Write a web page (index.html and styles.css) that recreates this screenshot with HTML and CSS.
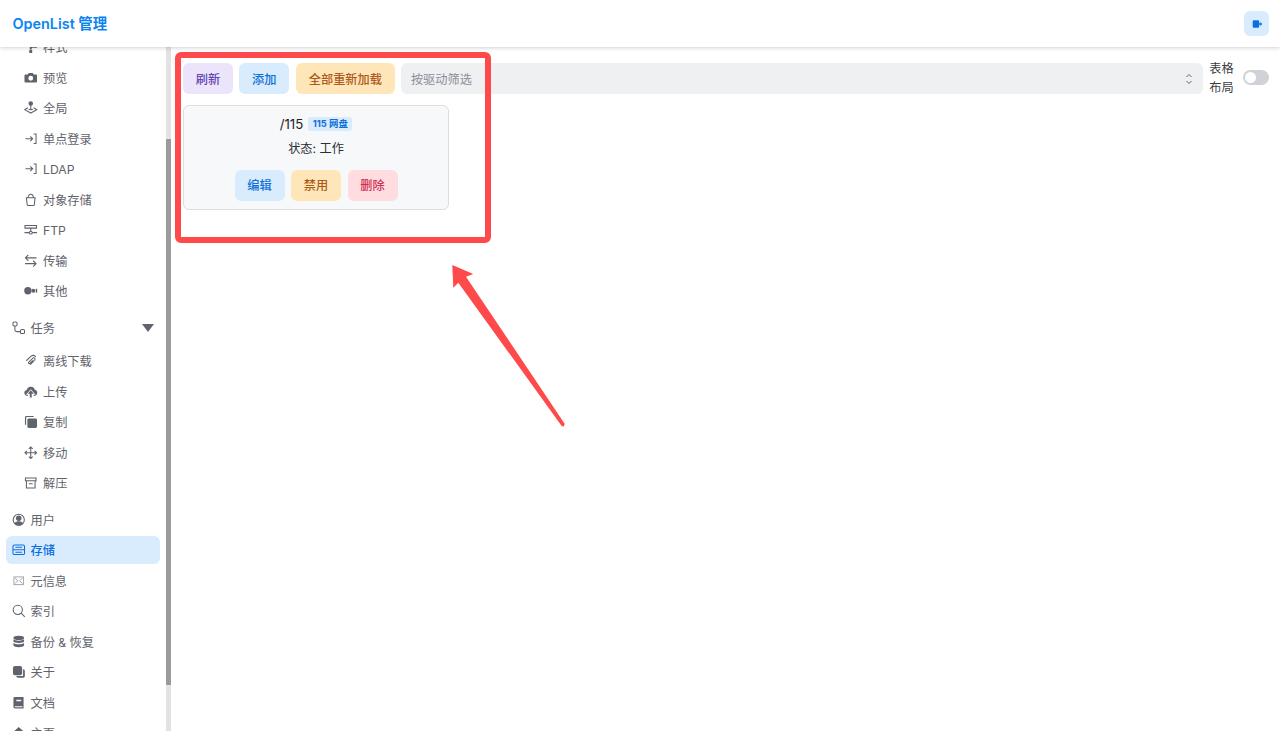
FILE: index.html
```html
<!DOCTYPE html>
<html lang="zh">
<head>
<meta charset="utf-8">
<title>OpenList 管理</title>
<link rel="stylesheet" href="styles.css">
</head>
<body>
<header class="topbar">
  <h1 class="brand">OpenList 管理</h1>
  <button class="logout" aria-label="退出"><svg viewBox="0 0 14 14" class="solid"><rect x="2" y="2.5" width="7.5" height="9" rx="1.5"/><path d="M9 6h2V4.500L13 7l-2 2.500V8H9z"/></svg></button>
</header>
<div class="shell">
  <aside class="side">
    <nav class="nav">
      <a class="item sub"><svg viewBox="0 0 14 14" class="solid"><path d="M1 1.500h9.500v4.500H1zM11.500 3h2v5H8v1.500H6V6.500h5.500zM5.500 10h3v3.500h-3z"/></svg>样式</a>
      <a class="item sub"><svg viewBox="0 0 14 14" class="solid"><path fill-rule="evenodd" d="M1.500 3.500h2.300L5 2h4l1.200 1.500h2.300a1 1 0 0 1 1 1v6.500a1 1 0 0 1-1 1h-11a1 1 0 0 1-1-1V4.500a1 1 0 0 1 1-1zM7 5a2.500 2.500 0 1 0 0 5 2.500 2.500 0 0 0 0-5z"/></svg>预览</a>
      <a class="item sub"><svg viewBox="0 0 14 14" class="line"><circle cx="7" cy="2.500" r="1.800" fill="currentColor"/><path d="M7 3v6M4 7 .8 9 7 12.500 13.200 9 10 7M4.800 8.500c1 .8 3.400.8 4.400 0"/></svg>全局</a>
      <a class="item sub"><svg viewBox="0 0 14 14" class="line"><path d="M1.500 7h7.500M6.500 4.500 9 7 6.500 9.500M10 2h2.500v10H10"/></svg>单点登录</a>
      <a class="item sub"><svg viewBox="0 0 14 14" class="line"><path d="M1.500 7h7.500M6.500 4.500 9 7 6.500 9.500M10 2h2.500v10H10"/></svg>LDAP</a>
      <a class="item sub"><svg viewBox="0 0 14 14" class="line"><path d="M2.500 5h9l-.8 7.200a1 1 0 0 1-1 .8H4.300a1 1 0 0 1-1-.8zM4.300 5c0-5 5.400-5 5.400 0"/></svg>对象存储</a>
      <a class="item sub"><svg viewBox="0 0 14 14" class="line"><path d="M1 2.500h12v2.800H1zM7 5.300V8.500M.5 10h5M8.500 10h5"/><circle cx="7" cy="10" r="1.500"/></svg>FTP</a>
      <a class="item sub"><svg viewBox="0 0 14 14" class="line"><path d="M13 4H1.500M4.500 1 1.500 4l3 3M1 10h11.500M9.500 7l3 3-3 3"/></svg>传输</a>
      <a class="item sub last"><svg viewBox="0 0 14 14" class="solid"><circle cx="4" cy="7" r="3.800"/><circle cx="9.700" cy="7" r="2"/><rect x="12.200" y="5" width="1.500" height="4"/></svg>其他</a>

      <a class="item top group"><svg viewBox="0 0 14 14" class="line"><rect x="1" y="1" width="4.200" height="4.200" rx="1.200"/><rect x="8.800" y="8.800" width="4.200" height="4.200" rx="1.200"/><path d="M3 5.200V9a2 2 0 0 0 2 2h3.800"/></svg>任务<span class="caret"></span></a>
      <a class="item sub"><svg viewBox="0 0 14 14" class="line"><path d="M2.500 7 7 2.500c2-1.500 4-1.500 5 .5M4.500 9 8 5.500M6.500 11 11 6.500c1-1.500 0-3-1.500-2.500L5 8.500c-1 1 .5 2 1.500 1l3-3"/></svg>离线下载</a>
      <a class="item sub"><svg viewBox="0 0 14 14" class="solid"><path d="M6 13V9H3.800L7 5.500 10.200 9H8v4zM4 11.500H3.300A3.200 3.200 0 0 1 2.800 5.200 4.300 4.300 0 0 1 11.200 5 3.300 3.300 0 0 1 10.700 11.500H10V10H12L7 4.500 2 10H4z"/></svg>上传</a>
      <a class="item sub"><svg viewBox="0 0 14 14" class="solid"><rect x="3.500" y="3.500" width="10" height="10" rx="1.500"/><path d="M1 10V2.500A1.500 1.500 0 0 1 2.500 1H10v1.200H3a.800.800 0 0 0-.800.800v7z"/></svg>复制</a>
      <a class="item sub"><svg viewBox="0 0 14 14" class="line"><path d="M7 1v12M1 7h12M5 3 7 1l2 2M5 11l2 2 2-2M3 5 1 7l2 2M11 5l2 2-2 2"/></svg>移动</a>
      <a class="item sub last"><svg viewBox="0 0 14 14" class="line"><path d="M1.500 2h11v3h-11zM2.500 5v7.500h9V5M5 8h4"/></svg>解压</a>

      <a class="item top"><svg viewBox="0 0 14 14" class="line"><circle cx="7" cy="7" r="5.800"/><circle cx="7" cy="5.500" r="2.300" fill="currentColor"/><path d="M3 11c1-2.500 7-2.500 8 0l-2 1.500H5z" fill="currentColor"/></svg>用户</a>
      <a class="item top active"><svg viewBox="0 0 14 14" class="line"><rect x="1" y="2" width="12" height="10" rx="1.500"/><path d="M1 7h12M3.500 4.500h7M3.500 9.500h7"/></svg>存储</a>
      <a class="item top"><svg viewBox="0 0 14 14" class="thin"><rect x="2" y="3" width="10" height="8"/><path d="m3 4 3 3-3 3M11 4 8 7l3 3"/></svg>元信息</a>
      <a class="item top"><svg viewBox="0 0 14 14" class="line"><circle cx="6" cy="6" r="4.800"/><path d="m9.500 9.500 3.800 3.800"/></svg>索引</a>
      <a class="item top"><svg viewBox="0 0 14 14" class="solid"><ellipse cx="7" cy="3" rx="5.500" ry="2.200"/><path d="M1.500 4.500C3 6.300 11 6.300 12.500 4.500v2.300c-1 2-10 2-11 0zM1.500 8.300c1.500 1.800 9.500 1.800 11 0v2.700c-1 2.300-10 2.300-11 0z"/></svg>备份 &amp; 恢复</a>
      <a class="item top"><svg viewBox="0 0 14 14" class="solid"><rect x="1" y="1" width="9.500" height="9.500" rx="2"/><path d="M11.500 4.500c1 0 1.800.6 1.800 1.800v5a2 2 0 0 1-2 2h-5c-1.200 0-1.800-.8-1.800-1.800h6.500a.5.500 0 0 0 .500-.5z"/></svg>关于</a>
      <a class="item top"><svg viewBox="0 0 14 14" class="solid"><path fill-rule="evenodd" d="M3 1h9v12H3a1.500 1.500 0 0 1-1.500-1.500v-9A1.500 1.500 0 0 1 3 1zm1.500 3v1.500h5V4zM3 10.500v1.200h7.800v-1.200z"/></svg>文档</a>
      <a class="item top"><svg viewBox="0 0 14 14" class="solid"><path d="M7 1 1 6.500h2V13h8V6.500h2z"/></svg>主页</a>
    </nav>
    <div class="scrollbar"><div class="thumb"></div></div>
  </aside>
  <main class="content">
    <div class="toolbar">
      <button class="btn violet">刷新</button>
      <button class="btn blue">添加</button>
      <button class="btn amber wide">全部重新加载</button>
      <div class="select"><span>按驱动筛选</span><svg viewBox="0 0 10 14" class="updown"><path d="M2.500 5 5 2.500 7.500 5M2.500 9 5 11.500 7.500 9"/></svg></div>
      <div class="layout-label">表格布局</div>
      <div class="switch"><span class="knob"></span></div>
    </div>
    <section class="card">
      <div class="card-title"><span class="path">/115</span><span class="badge">115 网盘</span></div>
      <div class="status">状态: 工作</div>
      <div class="card-actions">
        <button class="btn blue">编辑</button>
        <button class="btn amber">禁用</button>
        <button class="btn red">删除</button>
      </div>
    </section>
  </main>
</div>
<svg class="annotation" viewBox="0 0 1280 731" aria-hidden="true">
  <rect class="frame" x="178" y="55" width="310" height="185" rx="3"/>
  <path class="arrow" d="M452.300 265 473.300 274 466 276.700 564.800 424 563.500 426.800 561.500 425.800 458.300 282.700 453.300 287.700z"/>
</svg>
</body>
</html>
```
FILE: styles.css
```css
* { box-sizing: border-box; }
html, body { margin: 0; height: 731px; overflow: hidden; background: #fff; }
body {
  font-family: Inter, "Noto Sans CJK SC", sans-serif;
  font-size: 12.2px;
  color: #1c2024;
}
.topbar {
  height: 47px;
  display: flex;
  align-items: center;
  justify-content: space-between;
  padding: 0 11px 0 12.500px;
  background: #fff;
  box-shadow: 0 1px 4px rgba(0,0,0,.18);
  position: relative;
  z-index: 2;
}
.brand { margin: 0 0 3px; font-size: 14.400px; font-weight: 600; color: #0a84f0; }
.logout {
  width: 25px; height: 25px; padding: 0; border: 0; border-radius: 6px;
  background: #d9ecfe; color: #0c6fdf;
  display: flex; align-items: center; justify-content: center;
}
.logout svg { width: 12px; height: 12px; }
.shell { display: flex; height: 684px; }
.side { width: 171px; flex: none; display: flex; height: 100%; }
.nav {
  width: 166px; flex: none; height: 100%; overflow: hidden;
  padding: 0 6px;
  display: flex; flex-direction: column; gap: 3px;
}
.item {
  flex: none; height: 27.500px; display: flex; align-items: center;
  border-radius: 6px; color: #5f636b; font-weight: 400;
}
.item:first-child { margin-top: -13.750px; }
.item svg { width: 13.500px; height: 13.500px; flex: none; margin-right: 5.500px; }
.top { padding-left: 6px; }
.top svg { margin-right: 5px; }
.sub { padding-left: 18px; }
.last { margin-bottom: 6px; }
.group { margin-bottom: 3px; }
.caret {
  margin-left: auto; margin-right: 6.500px;
  width: 0; height: 0;
  border-left: 6px solid transparent; border-right: 6px solid transparent;
  border-top: 8px solid #60646c;
}
.active { background: #d9ecfe; color: #0c6fdf; font-weight: 500; }
.solid { fill: currentColor; stroke: none; }
.line { fill: none; stroke: currentColor; stroke-width: 1.100; }
.thin { fill: none; stroke: #a3a6ab; stroke-width: 1; }
.scrollbar { width: 5px; height: 100%; background: #e2e2e2; }
.thumb { width: 100%; height: 546px; margin-top: 92px; background: #9b9b9b; }
.content { flex: 1; min-width: 0; padding: 13px 11px 0 12px; }
.toolbar { display: flex; align-items: center; gap: 6.300px; }
.btn {
  width: 50px; height: 30.500px; flex: none; padding: 0;
  border: 0; border-radius: 6px;
  font: 500 12.200px Inter, "Noto Sans CJK SC", sans-serif;
}
.wide { width: 99.500px; }
.violet { background: #ebe4fb; color: #6246b4; }
.blue { background: #d9ecfe; color: #0f6fd8; }
.amber { background: #ffe6b8; color: #ad5a1c; }
.red { background: #ffdce0; color: #d02f50; }
.select {
  flex: 1; min-width: 0; height: 30.500px;
  display: flex; align-items: center; justify-content: space-between;
  padding: 0 9px 0 9.500px;
  background: #eff0f2; border-radius: 6px; color: #8b8d98;
}
.updown { width: 10px; height: 14px; fill: none; stroke: #60646c; stroke-width: 1; }
.layout-label { width: 26px; line-height: 18.500px; color: #3a3d42; margin-right: 1.500px; }
.switch {
  width: 26px; height: 15px; flex: none; border-radius: 8px;
  background: #cfd2d6; padding: 2px; margin-bottom: 2px;
}
.knob { display: block; width: 11px; height: 11px; border-radius: 50%; background: #fff; }
.card {
  width: 266px; height: 105px; margin-top: 8px;
  background: #f7f8fa; border: 1px solid #dcdee1; border-radius: 6px;
  display: flex; flex-direction: column; align-items: center;
  padding-top: 10px;
}
.card-title { display: flex; align-items: center; gap: 5px; height: 16px; }
.path { color: #1c2024; font-size: 13.200px; }
.badge {
  height: 14px; padding: 0 4.500px; border-radius: 3px;
  background: #d9ecfe; color: #0f6fd8;
  font-size: 9.400px; font-weight: 700; line-height: 14px;
}
.status { margin-top: 8px; height: 18px; line-height: 18px; color: #2b2e33; }
.card-actions { display: flex; gap: 6.500px; margin-top: 12px; }
.annotation { position: absolute; left: 0; top: 0; width: 1280px; height: 731px; z-index: 3; pointer-events: none; }
.frame { fill: none; stroke: #fe4a4b; stroke-width: 6; }
.arrow { fill: #fe4a4b; }
```
